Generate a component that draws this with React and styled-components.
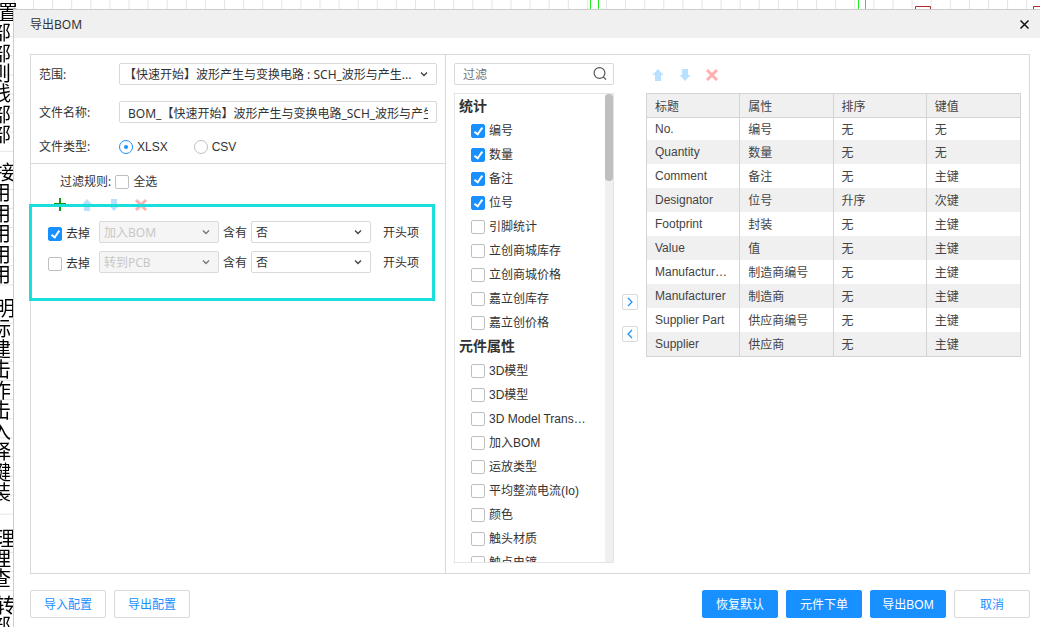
import React, { useState } from 'react';
import styled, { createGlobalStyle, css } from 'styled-components';

const GlobalStyle = createGlobalStyle`
  *, *::before, *::after { box-sizing: border-box; }
  body {
    margin: 0;
    overflow: hidden;
    background: #fff;
    color: #333;
    font: 12px/16px "Liberation Sans", "Noto Sans CJK SC", sans-serif;
  }
  input, select, button { font: inherit; color: inherit; margin: 0; }
`;

const uiFont = '"Noto Sans", "Noto Sans CJK SC", sans-serif';

/* schematic behind the dialog */
const Canvas = styled.div`
  position: fixed;
  inset: 0;
  overflow: hidden;
`;

const Sheet = styled.svg`
  position: absolute;
  inset: 0;
  width: 100%;
  height: 100%;
`;

const Notes = styled.div`
  position: absolute;
  top: 0;
  left: -9px;
  padding-top: 2px;
  color: #000;
  font: 20px/20px "Noto Sans CJK SC", sans-serif;
  white-space: nowrap;
`;

const NoteBlock = styled.div`
  display: flex;
  flex-direction: column;
  justify-content: space-between;
  height: ${(p) => p.$height}px;
  margin-top: ${(p) => p.$gap}px;
`;

const NoteTitle = styled.span`
  padding-left: ${(p) => p.$indent}px;
`;

const Dialog = styled.section`
  position: relative;
  display: flex;
  flex-direction: column;
  height: calc(100vh - 9px);
  margin: 9px 0 0 13px;
  border-top: 1px solid #ccc;
  border-left: 1px solid #ccc;
  background: #fff;
`;

const Header = styled.header`
  display: flex;
  align-items: center;
  justify-content: space-between;
  height: 28px;
  padding: 0 10px 0 16px;
  background: #f0f0f0;
`;

const Title = styled.h1`
  margin: 0;
  padding-top: 2px;
  font: 12px/16px ${uiFont};
`;

const CloseButton = styled.button`
  display: flex;
  padding: 0;
  border: 0;
  background: none;
  color: #111;
`;

const Body = styled.div`
  display: flex;
  flex: 1;
  min-height: 0;
  margin: 16px 10px 16px 16px;
  border: 1px solid #d9d9d9;
`;

const LeftPane = styled.div`
  flex: 0 0 415px;
  border-right: 1px solid #d9d9d9;
`;

const FileForm = styled.div`
  display: flex;
  flex-direction: column;
  gap: 16px;
  padding: 8px;
  border-bottom: 1px solid #d9d9d9;
`;

const FormRow = styled.div`
  display: grid;
  grid-template-columns: 80px 1fr;
  align-items: center;
  font-family: ${uiFont};
`;

const FormLabel = styled.label`
  padding-top: 2px;
`;

const boxed = css`
  width: 100%;
  height: 22px;
  border: 1px solid #d9d9d9;
  border-radius: 2px;
  background: #fff;
  outline: none;
`;

const TextInput = styled.input`
  ${boxed}
  padding: 2px 8px 0;
  font-family: ${uiFont};
`;

const SelectWrap = styled.span`
  position: relative;
  display: block;
  width: ${(p) => p.$width || '100%'};
  color: ${(p) => (p.$disabled ? '#777' : '#444')};
`;

const SelectBox = styled.select`
  ${boxed}
  appearance: none;
  padding: 2px 20px 0 4px;
  color: #333;
  font-family: ${uiFont};
  &:disabled {
    background: #f5f5f5;
    color: #c8c8c8;
    opacity: 1;
  }
`;

const Chevron = styled.svg`
  position: absolute;
  top: 7px;
  right: 9px;
  pointer-events: none;
`;

const RadioGroup = styled.div`
  display: flex;
  gap: 26px;
`;

const Option = styled.label`
  display: flex;
  align-items: center;
  gap: 4px;
  font-family: "Liberation Sans", "Noto Sans CJK SC", sans-serif;
`;

const Radio = styled.input`
  appearance: none;
  display: grid;
  place-content: center;
  width: 14px;
  height: 14px;
  border: 1px solid #bfbfbf;
  border-radius: 50%;
  background: #fff;
  &:checked { border-color: #1890ff; }
  &:checked::after {
    content: '';
    width: 4px;
    height: 4px;
    border-radius: 50%;
    background: #1890ff;
  }
`;

const Checkbox = styled.input`
  appearance: none;
  display: grid;
  flex: none;
  justify-content: center;
  width: 14px;
  height: 14px;
  border: 1px solid #bfbfbf;
  border-radius: 2px;
  background: #fff;
  &:checked {
    border-color: #1890ff;
    background: #1890ff;
  }
  &:checked::after {
    content: '';
    width: 5px;
    height: 9px;
    margin-top: 1px;
    border: solid #fff;
    border-width: 0 2px 2px 0;
    transform: rotate(35deg);
  }
`;

const Rules = styled.div`
  position: relative;
  padding-top: 8px;
`;

const RulesHead = styled.div`
  display: flex;
  align-items: center;
  gap: 4px;
  height: 20px;
  padding-left: 29px;
  font-family: ${uiFont};
`;

const Tools = styled.div`
  display: flex;
  align-items: center;
  gap: 13px;
`;

const RuleTools = styled(Tools)`
  margin-top: 6px;
  padding-left: 22px;
`;

const ToolButton = styled.button`
  display: flex;
  padding: 0;
  border: 0;
  background: none;
`;

const RuleList = styled.div`
  display: flex;
  flex-direction: column;
  gap: 8px;
  padding: 9px 0 0 17px;
`;

const RuleRow = styled.div`
  display: flex;
  align-items: center;
  gap: 4px;
`;

const RuleCheck = styled(Option)`
  padding: 4px 5px 0 0;
`;

const RuleText = styled.span`
  padding: 2px 0 0 ${(p) => (p.$last ? 8 : 0)}px;
`;

/* marks the rule area on top of the form */
const Highlight = styled.div`
  position: absolute;
  top: 40px;
  left: -2px;
  right: 10px;
  height: 97px;
  border: 3px solid #1adedc;
  pointer-events: none;
`;

const RightPane = styled.div`
  display: flex;
  flex: 1;
  gap: 8px;
  min-width: 0;
  padding: 8px 8px 0;
`;

const FieldPane = styled.div`
  display: flex;
  flex: 0 0 160px;
  flex-direction: column;
  gap: 8px;
  min-width: 0;
  min-height: 0;
  padding-bottom: 10px;
`;

const Search = styled.label`
  ${boxed}
  display: flex;
  align-items: center;
  flex: none;
  padding: 0 5px 0 8px;
  color: #555;
`;

const SearchInput = styled.input`
  flex: 1;
  min-width: 0;
  padding: 2px 0 0;
  border: 0;
  outline: none;
  background: none;
  &::placeholder { color: #757575; }
`;

const FieldBox = styled.div`
  display: flex;
  flex: 1;
  min-height: 0;
  border: 1px solid #e4e4e4;
`;

const FieldScroll = styled.div`
  flex: 1;
  min-width: 0;
  overflow-y: auto;
  scrollbar-width: none;
`;

const Track = styled.div`
  flex: 0 0 8px;
  background: #f0f0f0;
`;

const Thumb = styled.div`
  height: 87px;
  border-radius: 4px;
  background: #bfbfbf;
`;

const GroupTitle = styled.h2`
  margin: 0;
  padding-left: 4px;
  font-size: 14px;
  font-weight: bold;
  line-height: 24px;
`;

const FieldItem = styled.label`
  display: flex;
  align-items: center;
  gap: 4px;
  height: 24px;
  padding: 2px 18px 0 16px;

  span {
    min-width: 0;
    overflow: hidden;
    text-overflow: ellipsis;
    white-space: nowrap;
  }
`;

const MoveColumn = styled.div`
  display: flex;
  flex: none;
  flex-direction: column;
  justify-content: center;
  gap: 16px;
`;

const MoveButton = styled.button`
  display: grid;
  place-items: center;
  width: 16px;
  height: 16px;
  padding: 0;
  border: 1px solid #d9d9d9;
  border-radius: 2px;
  background: #fff;
  color: #1890ff;
`;

const TablePane = styled.div`
  flex: 1;
  min-width: 0;
`;

const TableTools = styled(Tools)`
  height: 24px;
  margin-bottom: 6px;
  padding-left: 5px;
`;

const Table = styled.table`
  width: 100%;
  table-layout: fixed;
  border: 1px solid #d4d4d4;
  border-spacing: 0;
  color: #444;

  th, td {
    height: 24px;
    padding: 0 8px;
    overflow: hidden;
    text-align: left;
    text-overflow: ellipsis;
    white-space: nowrap;
    font-weight: normal;
  }
  th:not(:last-child), td:not(:last-child) { border-right: 1px solid #d4d4d4; }
  th {
    padding-top: 2px;
    border-bottom: 1px solid #d4d4d4;
    background: #f0f0f0;
  }
  td:not(:first-child) { padding-top: 2px; }
  tbody tr:first-child td { height: 22px; }
  tbody tr:nth-child(even) { background: #f0f0f0; }
`;

const Footer = styled.footer`
  display: flex;
  gap: 8px;
  padding: 0 10px 9px 16px;
`;

const Spacer = styled.div`
  flex: 1;
`;

const Button = styled.button`
  width: 76px;
  height: 28px;
  padding: 2px 0 0;
  border: 1px solid ${(p) => (p.$primary ? '#1890ff' : '#d9d9d9')};
  border-radius: 2px;
  background: ${(p) => (p.$primary ? '#1890ff' : '#fff')};
  color: ${(p) => (p.$primary ? '#fff' : '#1890ff')};
`;

const UpIcon = () => (
  <svg width="14" height="14" viewBox="0 0 14 14">
    <path d="M7 1l5.5 6H10v6H4V7H1.5z" fill="#bae0ff" />
  </svg>
);

const DownIcon = () => (
  <svg width="14" height="14" viewBox="0 0 14 14">
    <path d="M7 13l5.5-6H10V1H4v6H1.5z" fill="#bae0ff" />
  </svg>
);

const RemoveIcon = () => (
  <svg width="14" height="14" viewBox="0 0 14 14">
    <path d="M2 2l10 10M12 2L2 12" stroke="#ffb0b0" strokeWidth="3" />
  </svg>
);

const AddIcon = () => (
  <svg width="14" height="14" viewBox="0 0 14 14">
    <path d="M1 6h12M7 0v13" stroke="#129a12" strokeWidth="2" />
  </svg>
);

const Select = ({ label, options, width, disabled, id }) => (
  <SelectWrap $width={width} $disabled={disabled}>
    <SelectBox id={id} aria-label={label} disabled={disabled}>
      {options.map((o) => (
        <option key={o}>{o}</option>
      ))}
    </SelectBox>
    <Chevron width="8" height="8" viewBox="0 0 8 8">
      <path d="M1 2.5l3 3 3-3" fill="none" stroke="currentColor" strokeWidth="1.4" />
    </Chevron>
  </SelectWrap>
);

const notes = [
  { height: 142, gap: 0, indent: 7, title: '置', lines: ['部', '部', '则', '线', '部', '部'] },
  { height: 122, gap: 18, indent: 4, title: '接', lines: ['用', '用', '用', '用', '用'] },
  { height: 204, gap: 14, indent: 4, title: '明', lines: ['标', '建', '击', '作', '击', '入', '择', '键', '装'] },
  { height: 60, gap: 26, indent: 4, title: '理', lines: ['理', '查'] },
  { height: 40, gap: 7, indent: 4, title: '转', lines: ['部'] },
];

const groups = [
  {
    name: '统计',
    items: ['编号', '数量', '备注', '位号', '引脚统计', '立创商城库存', '立创商城价格', '嘉立创库存', '嘉立创价格'],
    checked: 4,
  },
  {
    name: '元件属性',
    items: ['3D模型', '3D模型', '3D Model Transform', '加入BOM', '运放类型', '平均整流电流(Io)', '颜色', '触头材质', '触点电镀'],
    checked: 0,
  },
];

const rows = [
  ['No.', '编号', '无', '无'],
  ['Quantity', '数量', '无', '无'],
  ['Comment', '备注', '无', '主键'],
  ['Designator', '位号', '升序', '次键'],
  ['Footprint', '封装', '无', '主键'],
  ['Value', '值', '无', '主键'],
  ['Manufacturer Part', '制造商编号', '无', '主键'],
  ['Manufacturer', '制造商', '无', '主键'],
  ['Supplier Part', '供应商编号', '无', '主键'],
  ['Supplier', '供应商', '无', '主键'],
];

const rules = [
  { field: '加入BOM', on: true },
  { field: '转到PCB', on: false },
];

const Background = () => (
  <Canvas aria-hidden="true">
    <Sheet>
      <defs>
        <pattern id="grid" x="13.9" y="17.1" width="19.1" height="19.1" patternUnits="userSpaceOnUse">
          <path d="M.5 0v19.1M0 .5h19.1" stroke="#e4e4e4" />
        </pattern>
      </defs>
      <rect width="100%" height="100%" fill="url(#grid)" />
      <path d="M590.5 0v9M598.5 0v9M858.5 0v9M865.5 0v9" stroke="#1fef1f" />
      <path d="M915.5 9V6.5h15V9M1033.5 9V6.5h15V9" fill="none" stroke="#b02a2a" />
    </Sheet>
    <Notes>
      {notes.map((n) => (
        <NoteBlock key={n.title} $height={n.height} $gap={n.gap}>
          <NoteTitle $indent={n.indent}>{n.title}</NoteTitle>
          {n.lines.map((l, k) => (
            <span key={k}>{l}</span>
          ))}
        </NoteBlock>
      ))}
    </Notes>
  </Canvas>
);

const FilePane = () => {
  const [type, setType] = useState('XLSX');
  return (
    <LeftPane>
      <FileForm>
        <FormRow>
          <FormLabel htmlFor="scope">范围:</FormLabel>
          <Select id="scope" options={['【快速开始】波形产生与变换电路 : SCH_波形与产生...']} />
        </FormRow>
        <FormRow>
          <FormLabel htmlFor="filename">文件名称:</FormLabel>
          <TextInput id="filename" defaultValue="BOM_【快速开始】波形产生与变换电路_SCH_波形与产生变换电路" />
        </FormRow>
        <FormRow>
          <span id="type-label">文件类型:</span>
          <RadioGroup role="radiogroup" aria-labelledby="type-label">
            {['XLSX', 'CSV'].map((t) => (
              <Option key={t}>
                <Radio type="radio" name="type" checked={type === t} onChange={() => setType(t)} />
                {t}
              </Option>
            ))}
          </RadioGroup>
        </FormRow>
      </FileForm>
      <Rules>
        <RulesHead>
          <span>过滤规则:</span>
          <Option>
            <Checkbox type="checkbox" />
            全选
          </Option>
        </RulesHead>
        <RuleTools>
          <ToolButton aria-label="添加"><AddIcon /></ToolButton>
          <ToolButton aria-label="上移"><UpIcon /></ToolButton>
          <ToolButton aria-label="下移"><DownIcon /></ToolButton>
          <ToolButton aria-label="删除"><RemoveIcon /></ToolButton>
        </RuleTools>
        <RuleList>
          {rules.map((r) => (
            <RuleRow key={r.field}>
              <RuleCheck>
                <Checkbox type="checkbox" defaultChecked={r.on} />
                去掉
              </RuleCheck>
              <Select label="属性" width="120px" options={[r.field]} disabled />
              <RuleText>含有</RuleText>
              <Select label="条件" width="120px" options={['否', '是']} />
              <RuleText $last>开头项</RuleText>
            </RuleRow>
          ))}
        </RuleList>
        <Highlight />
      </Rules>
    </LeftPane>
  );
};

const FieldList = () => (
  <FieldPane>
    <Search>
      <SearchInput type="text" placeholder="过滤" aria-label="过滤" />
      <svg width="16" height="16" viewBox="0 0 16 16" fill="none" stroke="currentColor" strokeWidth="1.2">
        <circle cx="7.5" cy="7" r="5.4" />
        <path d="M11.3 10.8l2.7 2.7" />
      </svg>
    </Search>
    <FieldBox>
      <FieldScroll>
        {groups.map((g) => (
          <div key={g.name}>
            <GroupTitle>{g.name}</GroupTitle>
            {g.items.map((item, i) => (
              <FieldItem key={i}>
                <Checkbox type="checkbox" defaultChecked={i < g.checked} />
                <span>{item}</span>
              </FieldItem>
            ))}
          </div>
        ))}
      </FieldScroll>
      <Track>
        <Thumb />
      </Track>
    </FieldBox>
  </FieldPane>
);

const App = () => {
  return (
    <>
      <GlobalStyle />
      <Background />
      <Dialog role="dialog" aria-labelledby="dialog-title">
        <Header>
          <Title id="dialog-title">导出BOM</Title>
          <CloseButton aria-label="关闭">
            <svg width="11" height="11" viewBox="0 0 11 11">
              <path d="M1.5 1.5l8 8M9.5 1.5l-8 8" stroke="currentColor" strokeWidth="1.5" />
            </svg>
          </CloseButton>
        </Header>
        <Body>
          <FilePane />
          <RightPane>
            <FieldList />
            <MoveColumn>
              <MoveButton aria-label="添加到表格">
                <svg width="8" height="10" viewBox="0 0 8 10">
                  <path d="M2 1l4 4-4 4" fill="none" stroke="currentColor" strokeWidth="1.2" />
                </svg>
              </MoveButton>
              <MoveButton aria-label="移出表格">
                <svg width="8" height="10" viewBox="0 0 8 10">
                  <path d="M6 1L2 5l4 4" fill="none" stroke="currentColor" strokeWidth="1.2" />
                </svg>
              </MoveButton>
            </MoveColumn>
            <TablePane>
              <TableTools>
                <ToolButton aria-label="上移"><UpIcon /></ToolButton>
                <ToolButton aria-label="下移"><DownIcon /></ToolButton>
                <ToolButton aria-label="删除"><RemoveIcon /></ToolButton>
              </TableTools>
              <Table>
                <thead>
                  <tr>
                    <th>标题</th>
                    <th>属性</th>
                    <th>排序</th>
                    <th>键值</th>
                  </tr>
                </thead>
                <tbody>
                  {rows.map((row) => (
                    <tr key={row[0]}>
                      {row.map((cell, i) => (
                        <td key={i}>{cell}</td>
                      ))}
                    </tr>
                  ))}
                </tbody>
              </Table>
            </TablePane>
          </RightPane>
        </Body>
        <Footer>
          <Button>导入配置</Button>
          <Button>导出配置</Button>
          <Spacer />
          <Button $primary>恢复默认</Button>
          <Button $primary>元件下单</Button>
          <Button $primary>导出BOM</Button>
          <Button>取消</Button>
        </Footer>
      </Dialog>
    </>
  );
};

export default App;
